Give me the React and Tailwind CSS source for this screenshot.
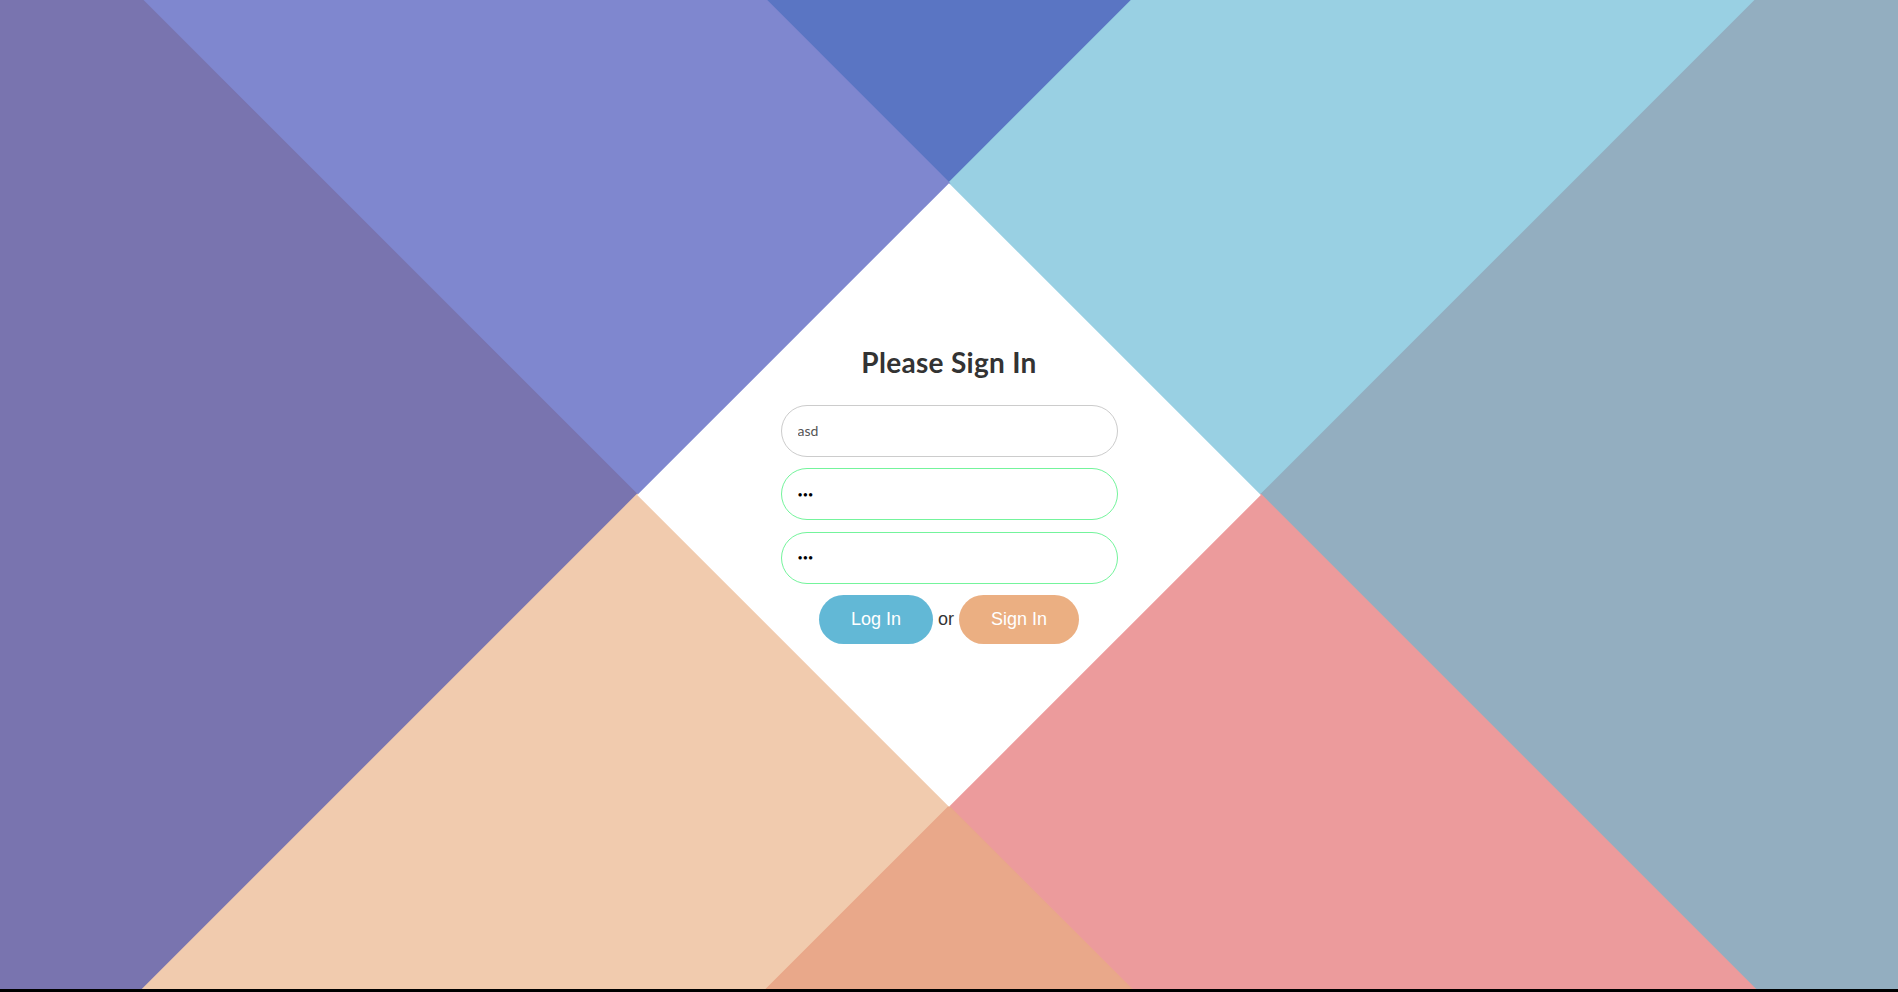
import React from "react";

// each cell carries a 1px ring of its own colour so the rotated edges don't leave hairline seams
const cells = [
  // row 0 (top-right side once rotated)
  "bg-[#5a75c3] shadow-[0_0_0_1px_#5a75c3]",
  "bg-[#99d0e3] shadow-[0_0_0_1px_#99d0e3]",
  "bg-[#93aec0] shadow-[0_0_0_1px_#93aec0]",
  // row 1
  "bg-[#7f87cf] shadow-[0_0_0_1px_#7f87cf]",
  "bg-white relative z-10",
  "bg-[#ec9b9c] shadow-[0_0_0_1px_#ec9b9c]",
  // row 2 (bottom-left side)
  "bg-[#7974af] shadow-[0_0_0_1px_#7974af]",
  "bg-[#f1cbae] shadow-[0_0_0_1px_#f1cbae]",
  "bg-[#e9a88a] shadow-[0_0_0_1px_#e9a88a]",
];

export default function App() {
  return (
    <div className="h-screen bg-black overflow-hidden">
      <div className="relative h-[989px] overflow-hidden flex items-center justify-center font-['Lato',_'Liberation_Sans',_sans-serif]">
        {/* rotated 3x3 backdrop, centre cell is the white diamond */}
        <div className="absolute left-1/2 top-1/2 -translate-x-1/2 -translate-y-1/2 rotate-45 grid grid-cols-[2000px_441px_2000px] grid-rows-[2000px_441px_2000px] bg-[#93aec0]">
          {cells.map((c, i) => (
            <div key={i} className={c} />
          ))}
        </div>

        <form
          className="relative z-10 flex flex-col items-center"
          onSubmit={(e) => e.preventDefault()}
        >
          <h1 className="text-[28px] leading-[34px] font-bold tracking-[0.3px] text-[#333] mb-[26px]">
            Please Sign In
          </h1>

          <div className="flex flex-col gap-[11.5px]">
            <input
              type="text"
              defaultValue="asd"
              className="w-[337px] h-[52px] rounded-full border border-[#cccccc] bg-white pl-4 text-[14px] text-[#555] outline-none"
            />
            <input
              type="password"
              defaultValue="asd"
              className="w-[337px] h-[52px] rounded-full border border-[#74f49c] bg-white pl-4 text-[9px] text-black outline-none"
            />
            <input
              type="password"
              defaultValue="asd"
              className="w-[337px] h-[52px] rounded-full border border-[#74f49c] bg-white pl-4 text-[9px] text-black outline-none"
            />
          </div>

          <div className="mt-[11.5px] flex items-center font-['Liberation_Sans',_Arial,_sans-serif] text-[18px]">
            <button
              type="submit"
              className="h-[49px] px-8 rounded-full bg-[#62b8d6] text-white"
            >
              Log In
            </button>
            <span className="mx-[5px] text-[#333]">or</span>
            <button
              type="button"
              className="h-[49px] px-8 rounded-full bg-[#ebaf82] text-white"
            >
              Sign In
            </button>
          </div>
        </form>
      </div>
    </div>
  );
}
